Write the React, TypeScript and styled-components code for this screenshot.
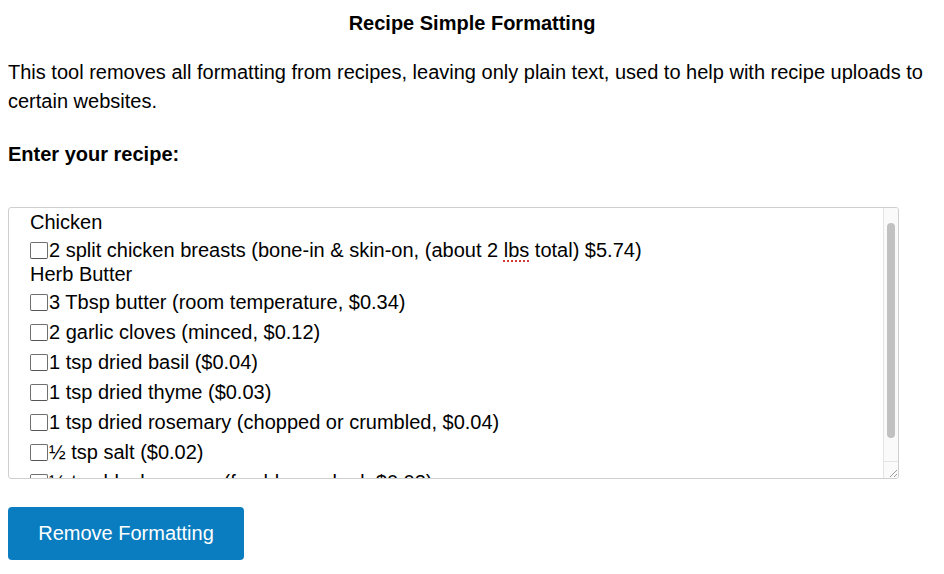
import styled, { createGlobalStyle } from 'styled-components'

type RecipeLine = {
  text: string
  boxed?: boolean
  flagged?: string
}

const recipeLines: Array<RecipeLine> = [
  { text: 'Chicken' },
  { text: '2 split chicken breasts (bone-in & skin-on, (about 2 lbs total) $5.74)', boxed: true, flagged: 'lbs' },
  { text: 'Herb Butter' },
  { text: '3 Tbsp butter (room temperature, $0.34)', boxed: true },
  { text: '2 garlic cloves (minced, $0.12)', boxed: true },
  { text: '1 tsp dried basil ($0.04)', boxed: true },
  { text: '1 tsp dried thyme ($0.03)', boxed: true },
  { text: '1 tsp dried rosemary (chopped or crumbled, $0.04)', boxed: true },
  { text: '½ tsp salt ($0.02)', boxed: true },
  { text: '½ tsp black pepper (freshly cracked, $0.02)', boxed: true },
  { text: '1 Tbsp olive oil ($0.13)', boxed: true },
]

const GlobalStyle = createGlobalStyle`
  body {
    margin: 8px;
    background: #ffffff;
    color: #000000;
    font-family: 'Liberation Sans', Arial, sans-serif;
  }
`

const Page = styled.div`
  display: flex;
  flex-direction: column;
  align-items: flex-start;
`

const Title = styled.h1`
  align-self: stretch;
  margin: 0;
  font-size: 20px;
  line-height: 30px;
  font-weight: bold;
  text-align: center;
`

const Intro = styled.p`
  margin: 20px 0 0;
  font-size: 20px;
  line-height: 29px;
`

const Label = styled.label`
  margin-top: 24px;
  font-size: 20px;
  line-height: 29px;
  font-weight: bold;
`

const Field = styled.div`
  position: relative;
  box-sizing: border-box;
  margin-top: 38px;
  width: 891px;
  height: 272px;
  border: 1px solid #cfcfcf;
  border-radius: 3px;
  overflow: hidden;
`

const RecipeBox = styled.div`
  box-sizing: border-box;
  height: 100%;
  padding: 3px 36px 0 21px;
  overflow-y: auto;
  font-size: 20px;
  scrollbar-width: none;
`

const Line = styled.div<{ $boxed?: boolean }>`
  display: flex;
  align-items: center;
  line-height: 22px;
  padding: ${({ $boxed }) => ($boxed ? '6px 0 2px' : '0')};
  white-space: nowrap;
`

const Box = styled.span`
  display: inline-block;
  box-sizing: border-box;
  width: 18px;
  height: 17px;
  margin: 1px 1px 0 0;
  border: 1px solid #6f6f6f;
  border-bottom-color: #555555;
  border-radius: 2px;
  background: #ffffff;
`

const Flagged = styled.span`
  text-decoration: underline dotted #d33b3b;
  text-decoration-thickness: 2px;
  text-underline-offset: 3px;
`

/* the browser draws no scrollbar in the photo, so the scroll column is drawn over the box */
const ScrollColumn = styled.div`
  position: absolute;
  top: 0;
  right: 0;
  bottom: 0;
  width: 15px;
  display: flex;
  flex-direction: column;
  box-sizing: border-box;
  background: #fafafa;
  border-left: 1px solid #e4e4e4;
`

const ScrollTrack = styled.div`
  flex: 1;
  padding: 15px 0 0 3px;
`

const Thumb = styled.div`
  width: 8px;
  height: 215px;
  border-radius: 4px;
  background: #c1c1c1;
`

const Grip = styled.div`
  height: 16px;
  border-top: 1px solid #e4e4e4;
  display: flex;
  align-items: flex-end;
  justify-content: flex-end;
`

const Button = styled.button`
  margin-top: 28px;
  width: 236px;
  height: 53px;
  border: none;
  border-radius: 4px;
  background: #0a7dc0;
  color: #ffffff;
  font-family: 'Liberation Sans', Arial, sans-serif;
  font-size: 20px;
  cursor: pointer;
`

const LineText = ({ line }: { line: RecipeLine }) => {
  if (!line.flagged) return <span>{line.text}</span>
  const [before, after] = line.text.split(line.flagged)
  return (
    <span>
      {before}
      <Flagged>{line.flagged}</Flagged>
      {after}
    </span>
  )
}

export default function App() {
  return (
    <>
      <GlobalStyle />
      <Page>
        <Title>Recipe Simple Formatting</Title>
        <Intro>
          This tool removes all formatting from recipes, leaving only plain text, used to help with recipe uploads to
          certain websites.
        </Intro>
        <Label htmlFor='recipe'>Enter your recipe:</Label>
        <Field>
          <RecipeBox id='recipe' role='textbox' aria-multiline='true'>
            {recipeLines.map((line, i) => (
              <Line key={i} $boxed={line.boxed}>
                {line.boxed && <Box />}
                <LineText line={line} />
              </Line>
            ))}
          </RecipeBox>
          <ScrollColumn>
            <ScrollTrack>
              <Thumb />
            </ScrollTrack>
            <Grip>
              <svg width='10' height='10' viewBox='0 0 10 10'>
                <path d='M9 2 L2 9 M9 6 L6 9' stroke='#9a9a9a' strokeWidth='1' fill='none' />
              </svg>
            </Grip>
          </ScrollColumn>
        </Field>
        <Button>Remove Formatting</Button>
      </Page>
    </>
  )
}
